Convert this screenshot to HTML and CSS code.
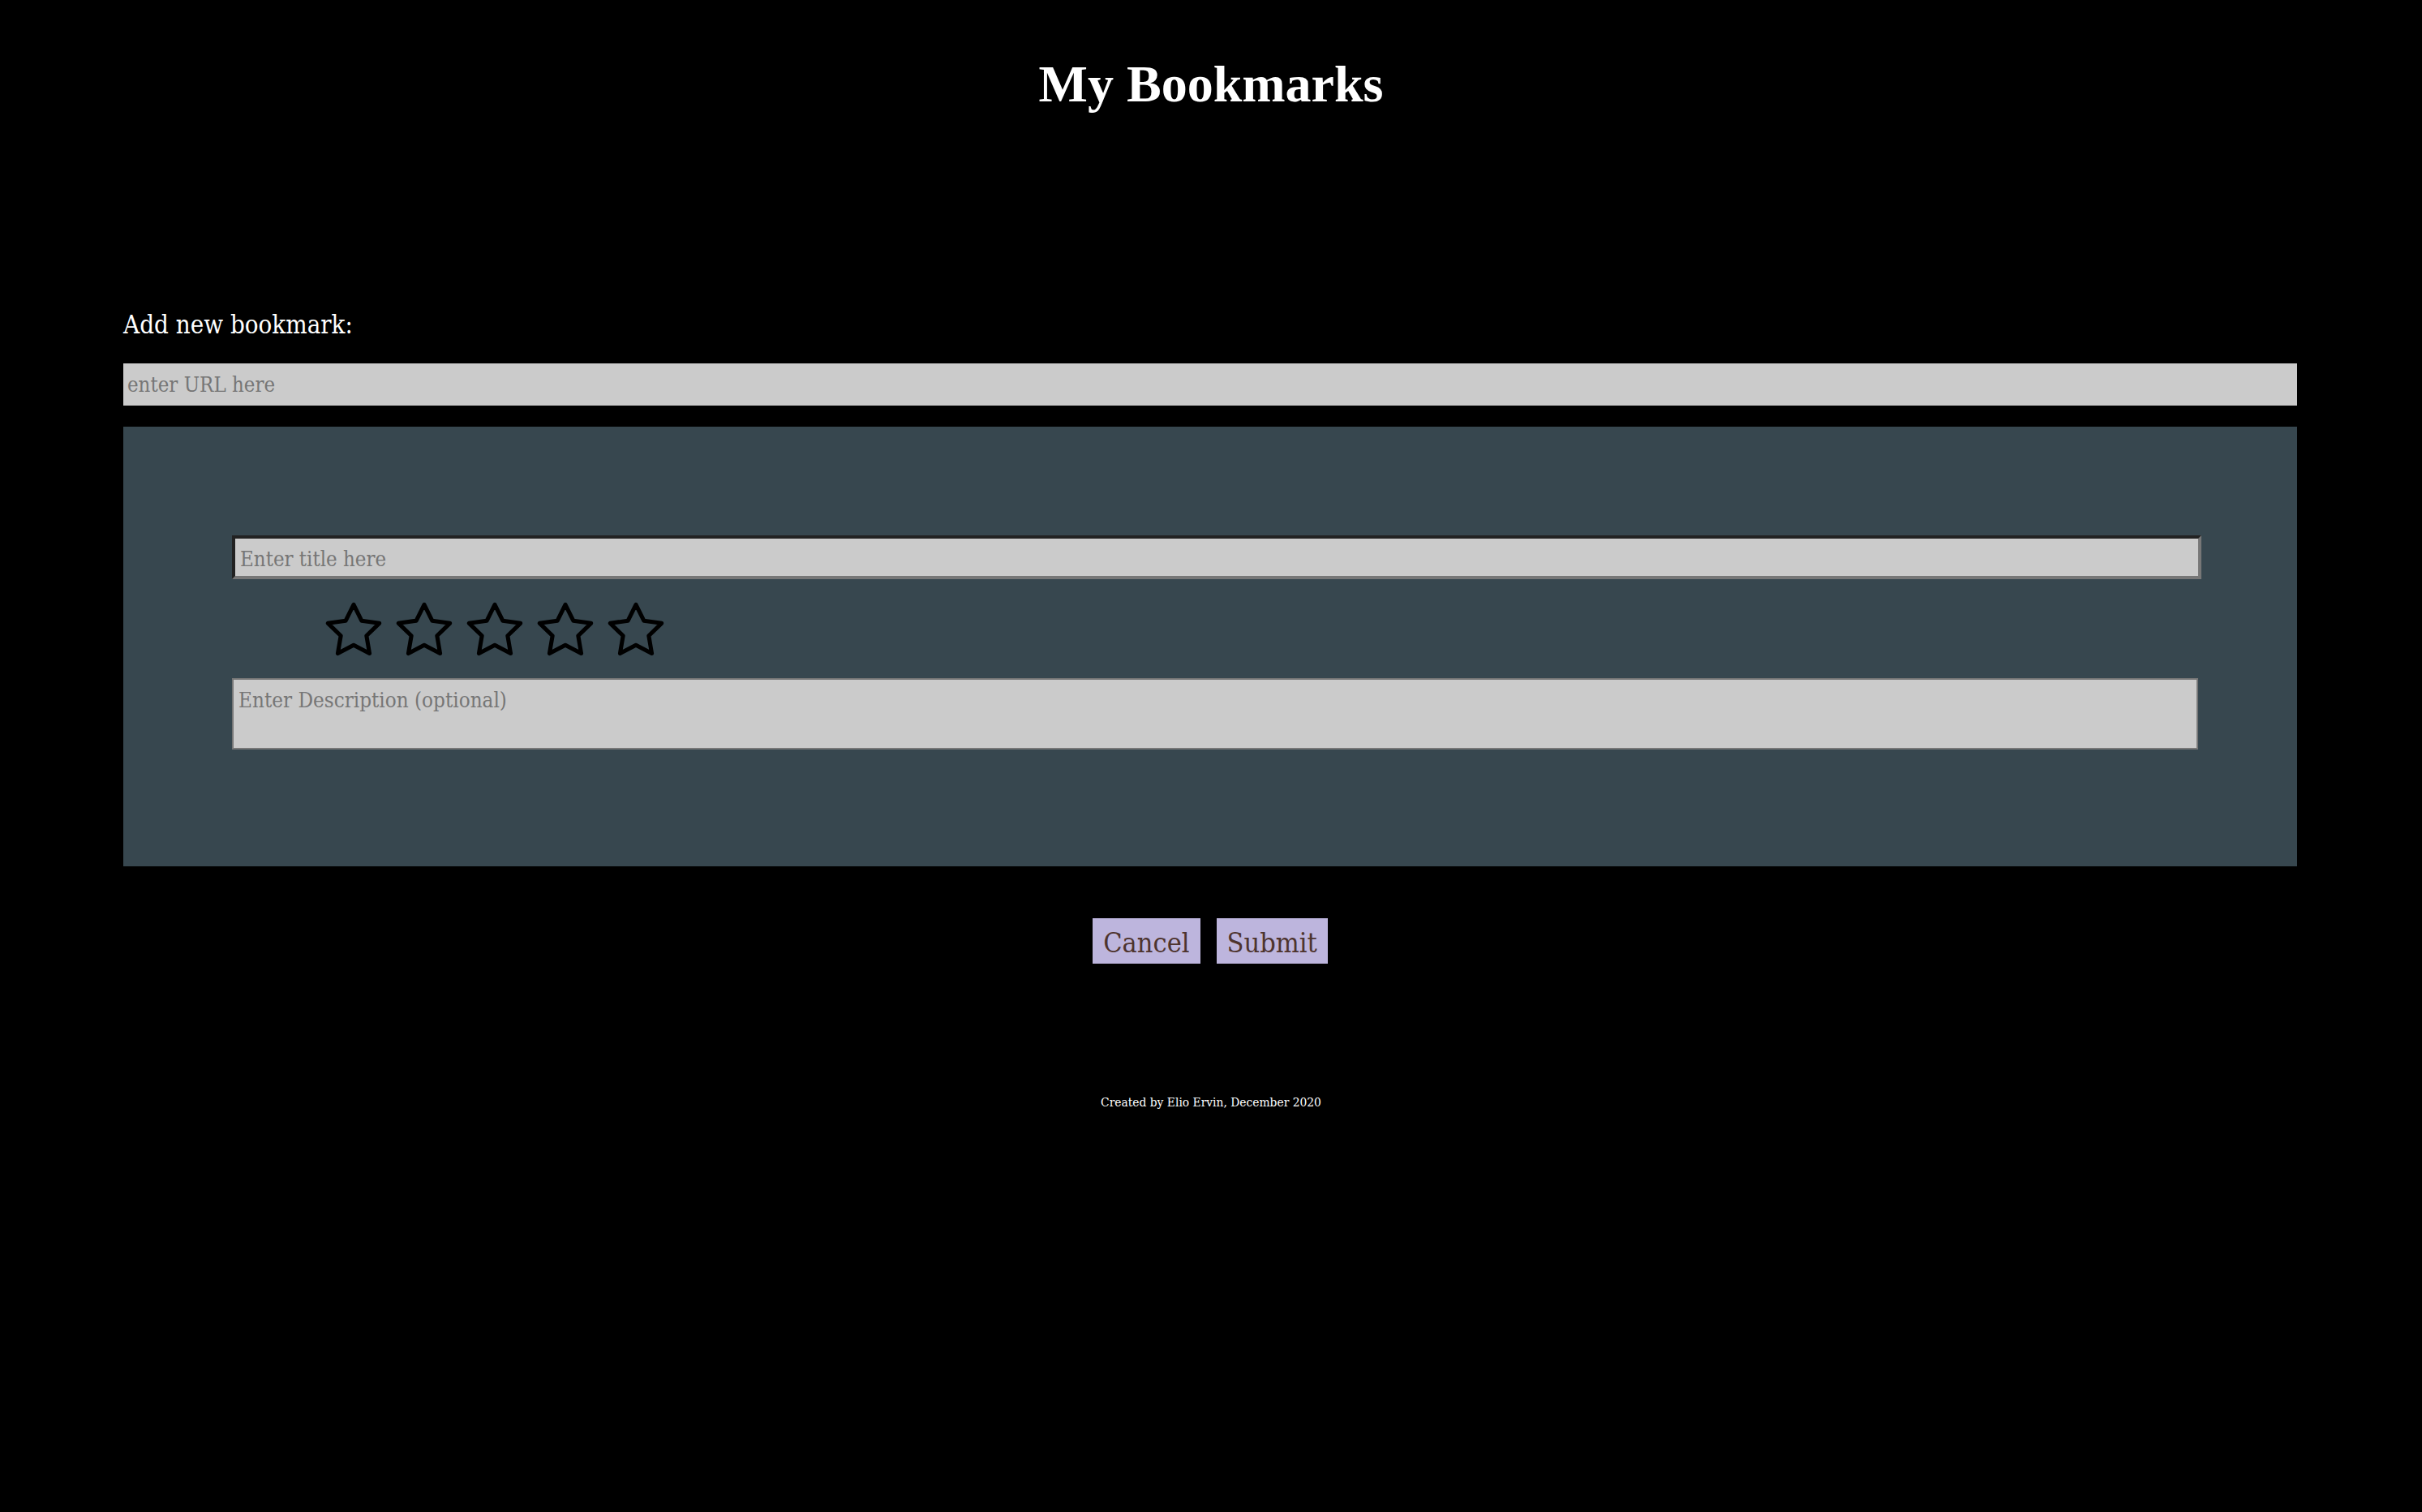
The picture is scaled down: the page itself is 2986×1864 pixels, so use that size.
FILE: index.html
```html
<!DOCTYPE html>
<html lang="en">
<head>
<meta charset="utf-8">
<title>My Bookmarks</title>
<link rel="stylesheet" href="styles.css">
</head>
<body>
<h1 class="page-title">My Bookmarks</h1>
<main class="container">
  <form class="add-form">
    <label class="add-label" for="url">Add new bookmark:</label>
    <input class="url-input" id="url" type="text" placeholder="enter URL here">
    <section class="details">
      <input class="title-input" type="text" placeholder="Enter title here">
      <div class="stars">
        <svg class="star" viewBox="0 0 24 24"><polygon points="12 2 15.09 8.26 22 9.27 17 14.14 18.18 21.02 12 17.77 5.82 21.02 7 14.14 2 9.27 8.91 8.26"/></svg>
        <svg class="star" viewBox="0 0 24 24"><polygon points="12 2 15.09 8.26 22 9.27 17 14.14 18.18 21.02 12 17.77 5.82 21.02 7 14.14 2 9.27 8.91 8.26"/></svg>
        <svg class="star" viewBox="0 0 24 24"><polygon points="12 2 15.09 8.26 22 9.27 17 14.14 18.18 21.02 12 17.77 5.82 21.02 7 14.14 2 9.27 8.91 8.26"/></svg>
        <svg class="star" viewBox="0 0 24 24"><polygon points="12 2 15.09 8.26 22 9.27 17 14.14 18.18 21.02 12 17.77 5.82 21.02 7 14.14 2 9.27 8.91 8.26"/></svg>
        <svg class="star" viewBox="0 0 24 24"><polygon points="12 2 15.09 8.26 22 9.27 17 14.14 18.18 21.02 12 17.77 5.82 21.02 7 14.14 2 9.27 8.91 8.26"/></svg>
      </div>
      <textarea class="desc-input" placeholder="Enter Description (optional)"></textarea>
    </section>
    <div class="actions">
      <button class="btn" type="button">Cancel</button>
      <button class="btn" type="submit">Submit</button>
    </div>
  </form>
</main>
<footer class="footer">Created by Elio Ervin, December 2020</footer>
</body>
</html>
```

FILE: styles.css
```css
html, body {
  margin: 0;
  padding: 0;
  background: #000;
}

body {
  color: #fff;
  font-family: "DejaVu Serif", "Liberation Serif", serif;
  font-stretch: condensed;
}

.page-title {
  margin: 67px 0 0;
  font-family: "Liberation Serif", "Times New Roman", serif;
  font-stretch: normal;
  font-weight: bold;
  font-size: 64px;
  line-height: 74px;
  text-align: center;
}

.container {
  margin: 0 0 0 152px;
  width: 2680px;
}

.add-form {
  display: flex;
  flex-direction: column;
}

.add-label {
  margin-top: 239px;
  font-size: 31px;
  line-height: 40px;
  color: #fff;
}

input, textarea, button {
  font-family: "DejaVu Serif", "Liberation Serif", serif;
  font-stretch: condensed;
}

.url-input {
  margin-top: 28px;
  box-sizing: border-box;
  width: 2680px;
  height: 52px;
  border: none;
  outline: none;
  background: #cbcbcb;
  padding: 0 5px;
  font-size: 25.6px;
  color: #333;
}

input::placeholder, textarea::placeholder {
  color: #767676;
  opacity: 1;
}

.details {
  margin-top: 26px;
  box-sizing: border-box;
  height: 542px;
  background: #37474f;
  padding: 134px 0 0 134px;
  display: flex;
  flex-direction: column;
  align-items: flex-start;
}

.title-input {
  box-sizing: border-box;
  width: 2428px;
  height: 54px;
  border-style: solid;
  border-width: 4px;
  border-color: #222 #777 #777 #222;
  background: #cbcbcb;
  padding: 4px 6px 0;
  font-size: 25.6px;
  outline: none;
}

.stars {
  display: flex;
  gap: 11px;
  margin: 25px 0 0 112px;
}

.star {
  width: 76px;
  height: 76px;
  fill: none;
  stroke: #000;
  stroke-width: 1.6;
  stroke-linejoin: round;
  stroke-linecap: round;
}

.desc-input {
  margin-top: 21px;
  box-sizing: border-box;
  width: 2424px;
  height: 88px;
  border: 2px solid #777;
  background: #cbcbcb;
  padding: 10px 6px 0;
  font-size: 25.8px;
  line-height: 30px;
  resize: none;
  outline: none;
}

.actions {
  margin-top: 64px;
  display: flex;
  justify-content: center;
  gap: 20px;
}

.btn {
  height: 56px;
  padding: 4px 13px 0;
  border: none;
  background: #bdb5dd;
  color: #4e342e;
  font-size: 34px;
  line-height: 48px;
  cursor: pointer;
}

.footer {
  margin-top: 161px;
  font-size: 15.4px;
  line-height: 20px;
  text-align: center;
  color: #fff;
}
```
